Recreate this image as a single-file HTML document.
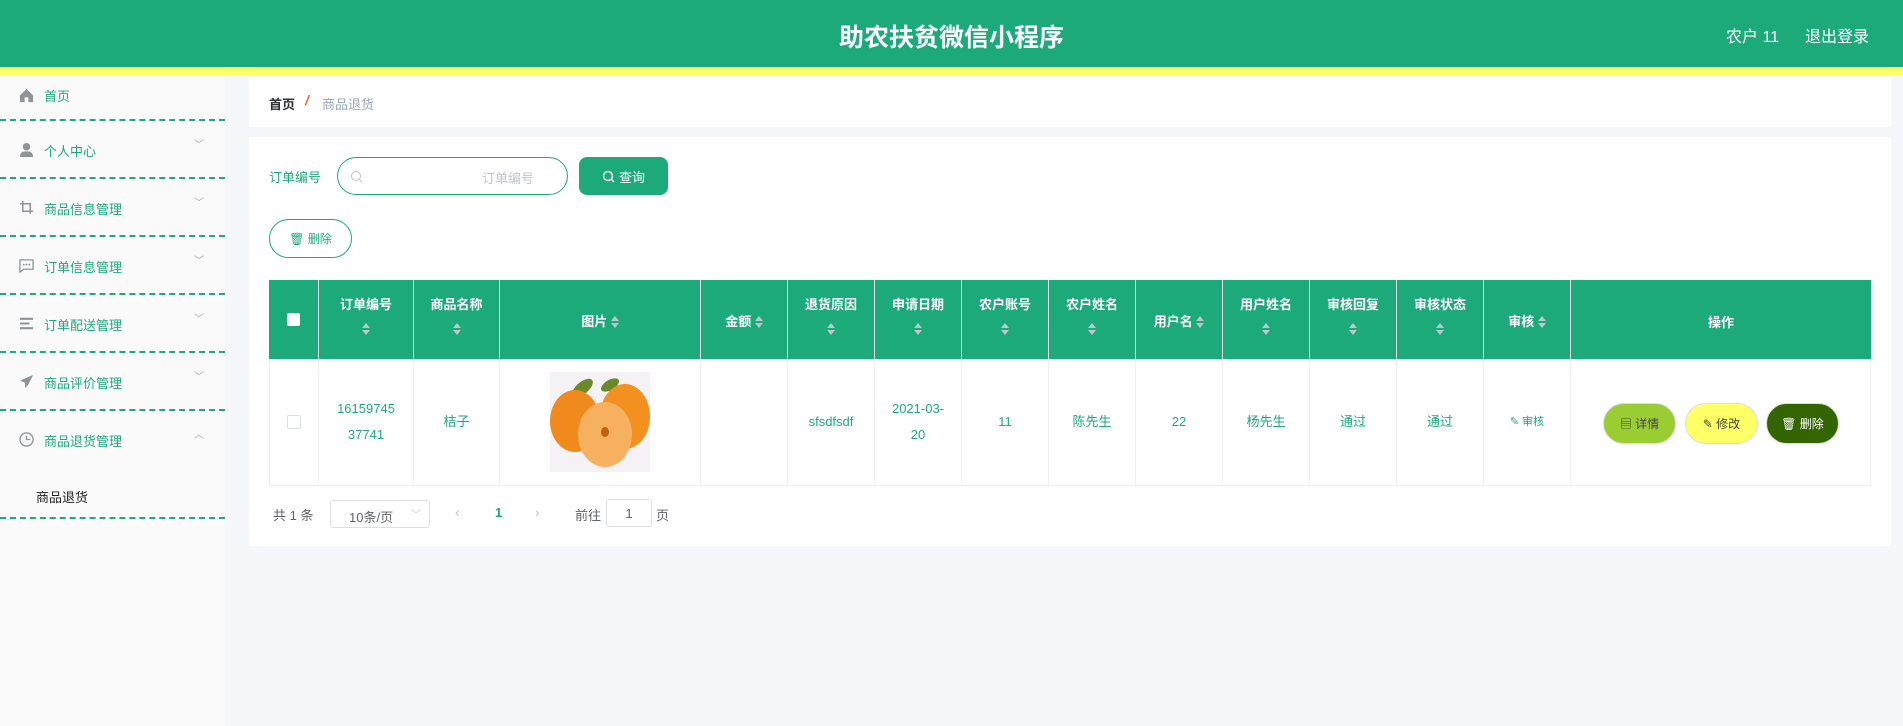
<!DOCTYPE html>
<html><head><meta charset="utf-8"><style>
*{box-sizing:border-box;margin:0;padding:0}
body{width:1903px;height:726px;overflow:hidden;background:#f5f7fa;font-family:"Liberation Sans","Noto Sans CJK SC",sans-serif;font-size:14px;position:relative}
.hd{position:absolute;left:0;top:0;width:1903px;height:67px;background:#1caa7b}
.yl{position:absolute;left:0;top:67px;width:1903px;height:8px;background:#ffff66}
.title{position:absolute;left:0;width:1903px;top:18px;text-align:center;color:#fff;font-size:25px;font-weight:bold}
.usr{position:absolute;top:23px;color:#fff;font-size:16px}
.sb{position:absolute;left:0;top:75px;width:225px;height:651px;background:#fafafa}
.mi{position:absolute;left:0;width:225px;height:58px;border-bottom:2px dashed #1caa7b;color:#1caa7b;font-size:13px}
.mi .t{position:absolute;left:44px;top:20px}
.mi .ic{position:absolute;left:19px;top:21px;width:15px;height:15px}
.mi .ar{position:absolute;left:194px;top:15px;color:#aaa;font-size:10px}
.box{position:absolute;background:#fff;left:249px;width:1642px}
.th{position:absolute;top:280px;height:79px;background:#1caa7b;color:#fff;font-weight:bold;font-size:13px;text-align:center;border-right:1px solid #e8f3ee}
.td{position:absolute;top:359px;height:127px;border-right:1px solid #ebeef5;border-bottom:1px solid #ebeef5;color:#1caa7b;font-size:13px;text-align:center;display:flex;align-items:center;justify-content:center;line-height:24px}
.sort{display:inline-block;width:8px;vertical-align:middle;position:relative;height:14px}
.sort:before{content:"";position:absolute;left:0;top:0;border:4px solid transparent;border-bottom:5px solid #c0c4cc;border-top:0}
.sort:after{content:"";position:absolute;left:0;top:7px;border:4px solid transparent;border-top:5px solid #c0c4cc;border-bottom:0}
.btn{position:absolute;top:403px;height:41px;width:73px;border-radius:21px;font-size:12px;display:flex;align-items:center;justify-content:center;border:1px solid #ddd}
</style></head><body>
<div class="hd"><div class="title">助农扶贫微信小程序</div>
<div class="usr" style="left:1726px">农户 11</div><div class="usr" style="left:1805px">退出登录</div></div>
<div class="yl"></div>
<div class="sb">
<div class="mi" style="top:0;height:46px"><svg class="ic" style="top:13px" viewBox="0 0 16 16"><path d="M1 8L8 1l7 7v7H10v-5H6v5H1z" fill="#909399"/></svg><span class="t" style="top:11px">首页</span></div>
<div class="mi" style="top:46px"><svg class="ic" viewBox="0 0 16 16"><circle cx="8" cy="5" r="4" fill="#909399"/><path d="M1 16c0-5 3-6 7-6s7 1 7 6z" fill="#909399"/></svg><span class="t">个人中心</span><span class="ar">﹀</span></div>
<div class="mi" style="top:104px"><svg class="ic" viewBox="0 0 16 16"><path d="M4 1v11h11M1 4h11v11" stroke="#909399" stroke-width="1.6" fill="none"/></svg><span class="t">商品信息管理</span><span class="ar">﹀</span></div>
<div class="mi" style="top:162px"><svg class="ic" viewBox="0 0 16 16"><path d="M1 2h14v10H5l-4 3z" stroke="#909399" stroke-width="1.4" fill="none"/><circle cx="5" cy="7" r="1" fill="#909399"/><circle cx="8" cy="7" r="1" fill="#909399"/><circle cx="11" cy="7" r="1" fill="#909399"/></svg><span class="t">订单信息管理</span><span class="ar">﹀</span></div>
<div class="mi" style="top:220px"><svg class="ic" viewBox="0 0 16 16"><path d="M1 3h14M1 8h10M1 13h14" stroke="#909399" stroke-width="2.2"/></svg><span class="t">订单配送管理</span><span class="ar">﹀</span></div>
<div class="mi" style="top:278px"><svg class="ic" viewBox="0 0 16 16"><path d="M15 1L1 7l5 2 1 6 3-4 5-10z" fill="#909399"/></svg><span class="t">商品评价管理</span><span class="ar">﹀</span></div>
<div class="mi" style="top:336px;height:108px"><svg class="ic" viewBox="0 0 16 16"><circle cx="8" cy="8" r="7" stroke="#909399" stroke-width="1.4" fill="none"/><path d="M8 4v4h4" stroke="#909399" stroke-width="1.4" fill="none"/></svg><span class="t">商品退货管理</span><span class="ar">︿</span><span style="position:absolute;left:36px;top:76px;color:#222;font-size:13px">商品退货</span></div>
</div>
<div class="box" style="top:77px;height:50px"><span style="position:absolute;left:20px;top:17px;font-size:13px;font-weight:bold;color:#303133">首页</span><span style="position:absolute;left:56px;top:15px;color:#f56c2a;font-weight:bold;font-style:italic">/</span><span style="position:absolute;left:73px;top:17px;color:#97a8be;font-size:13px">商品退货</span></div>
<div class="box" style="top:137px;height:409px"></div>
<span style="position:absolute;left:269px;top:167px;color:#1caa7b;font-size:13px">订单编号</span>
<div style="position:absolute;left:337px;top:157px;width:231px;height:38px;border:1px solid #1caa7b;border-radius:19px;background:#fff"><svg style="position:absolute;left:12px;top:12px" width="13" height="13" viewBox="0 0 13 13"><circle cx="6" cy="6" r="4.5" stroke="#c0c4cc" fill="none"/><path d="M9 9l3 3" stroke="#c0c4cc"/></svg><span style="position:absolute;left:144px;top:10px;color:#c0c4cc;font-size:13px">订单编号</span></div>
<div style="position:absolute;left:579px;top:157px;width:89px;height:38px;background:#1caa7b;border-radius:8px;color:#fff;font-size:13px;display:flex;align-items:center;justify-content:center"><svg width="13" height="13" viewBox="0 0 13 13" style="margin-right:4px"><circle cx="6" cy="6" r="4.5" stroke="#fff" stroke-width="1.4" fill="none"/><path d="M9 9l3 3" stroke="#fff" stroke-width="1.4"/></svg>查询</div>
<div style="position:absolute;left:269px;top:219px;width:83px;height:39px;border:1px solid #1caa7b;border-radius:20px;background:#fff;color:#1caa7b;font-size:12px;display:flex;align-items:center;justify-content:center">🗑&nbsp;删除</div>
<div class="th" style="left:269px;width:50px"><span style="display:inline-block;width:13px;height:13px;background:#fff;border-radius:2px;margin-top:33px"></span></div>
<div class="th" style="left:319px;width:95px;padding-top:14px">订单编号<br><span class="sort" style="margin-top:10px"></span></div>
<div class="th" style="left:414px;width:86px;padding-top:14px">商品名称<br><span class="sort" style="margin-top:10px"></span></div>
<div class="th" style="left:500px;width:201px;padding-top:31px">图片 <span class="sort"></span></div>
<div class="th" style="left:701px;width:87px;padding-top:31px">金额 <span class="sort"></span></div>
<div class="th" style="left:788px;width:87px;padding-top:14px">退货原因<br><span class="sort" style="margin-top:10px"></span></div>
<div class="th" style="left:875px;width:87px;padding-top:14px">申请日期<br><span class="sort" style="margin-top:10px"></span></div>
<div class="th" style="left:962px;width:87px;padding-top:14px">农户账号<br><span class="sort" style="margin-top:10px"></span></div>
<div class="th" style="left:1049px;width:87px;padding-top:14px">农户姓名<br><span class="sort" style="margin-top:10px"></span></div>
<div class="th" style="left:1136px;width:87px;padding-top:31px">用户名 <span class="sort"></span></div>
<div class="th" style="left:1223px;width:87px;padding-top:14px">用户姓名<br><span class="sort" style="margin-top:10px"></span></div>
<div class="th" style="left:1310px;width:87px;padding-top:14px">审核回复<br><span class="sort" style="margin-top:10px"></span></div>
<div class="th" style="left:1397px;width:87px;padding-top:14px">审核状态<br><span class="sort" style="margin-top:10px"></span></div>
<div class="th" style="left:1484px;width:87px;padding-top:31px">审核 <span class="sort"></span></div>
<div class="th" style="left:1571px;width:300px;padding-top:32px;border-right:0">操作</div>
<div class="td" style="left:269px;width:50px;border-left:1px solid #ebeef5"><span style="width:14px;height:14px;border:1px solid #dcdfe6;border-radius:2px"></span></div>
<div class="td" style="left:319px;width:95px;line-height:26px">16159745<br>37741</div>
<div class="td" style="left:414px;width:86px">桔子</div>
<div class="td" style="left:500px;width:201px"><div style="width:100px;height:100px;background:#f4f2f4;position:relative;overflow:hidden">
<div style="position:absolute;left:20px;top:10px;width:25px;height:12px;background:#6a8a2a;border-radius:50%;transform:rotate(-40deg)"></div>
<div style="position:absolute;left:50px;top:8px;width:20px;height:10px;background:#6a8a2a;border-radius:50%;transform:rotate(-30deg)"></div>
<div style="position:absolute;left:0;top:18px;width:50px;height:62px;background:#f08a1c;border-radius:50%"></div>
<div style="position:absolute;left:50px;top:12px;width:50px;height:65px;background:#f29020;border-radius:50%"></div>
<div style="position:absolute;left:28px;top:30px;width:54px;height:65px;background:#f6b060;border-radius:50%"></div>
<div style="position:absolute;left:51px;top:55px;width:8px;height:10px;background:#c06010;border-radius:50%"></div></div></div>
<div class="td" style="left:701px;width:87px"></div>
<div class="td" style="left:788px;width:87px">sfsdfsdf</div>
<div class="td" style="left:875px;width:87px;line-height:26px">2021-03-<br>20</div>
<div class="td" style="left:962px;width:87px">11</div>
<div class="td" style="left:1049px;width:87px">陈先生</div>
<div class="td" style="left:1136px;width:87px">22</div>
<div class="td" style="left:1223px;width:87px">杨先生</div>
<div class="td" style="left:1310px;width:87px">通过</div>
<div class="td" style="left:1397px;width:87px">通过</div>
<div class="td" style="left:1484px;width:87px;font-size:11px">✎ 审核</div>
<div class="td" style="left:1571px;width:300px"></div>
<div class="btn" style="left:1603px;background:#9acd32;color:#444">▤ 详情</div>
<div class="btn" style="left:1685px;background:#ffff66;color:#444">✎ 修改</div>
<div class="btn" style="left:1766px;background:#336600;color:#fff">🗑 删除</div>
<div style="position:absolute;left:273px;top:505px;color:#606266;font-size:13px">共 1 条</div>
<div style="position:absolute;left:330px;top:500px;width:100px;height:28px;border:1px solid #dcdfe6;border-radius:3px;background:#fff;color:#606266;font-size:13px;padding:6px 0 0 18px">10条/页<span style="position:absolute;right:8px;top:5px;color:#c0c4cc;font-size:10px">﹀</span></div>
<span style="position:absolute;left:455px;top:504px;color:#c0c4cc">‹</span>
<span style="position:absolute;left:495px;top:505px;color:#1caa7b;font-weight:bold;font-size:13px">1</span>
<span style="position:absolute;left:535px;top:504px;color:#c0c4cc">›</span>
<span style="position:absolute;left:575px;top:505px;color:#606266;font-size:13px">前往</span>
<div style="position:absolute;left:606px;top:499px;width:46px;height:28px;border:1px solid #dcdfe6;border-radius:3px;background:#fff;text-align:center;padding-top:6px;color:#606266;font-size:13px">1</div>
<span style="position:absolute;left:656px;top:505px;color:#606266;font-size:13px">页</span>
</body></html>
